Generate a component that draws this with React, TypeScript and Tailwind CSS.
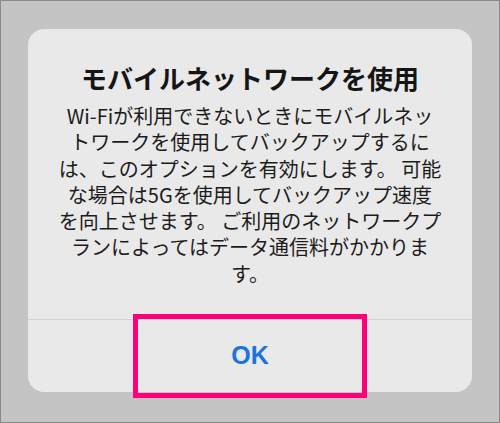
export default function App() {
  const lines = [
    'Wi-Fiが利用できないときにモバイルネッ',
    'トワークを使用してバックアップするに',
    'は、このオプションを有効にします。 可能',
    'な場合は5Gを使用してバックアップ速度',
    'を向上させます。 ご利用のネットワークプ',
    'ランによってはデータ通信料がかかりま',
    'す。',
  ];

  return (
    <div
      className="w-[500px] h-[423px] border border-[#8a8a8a] bg-[#c4c4c4] pt-[28px] pl-[27px]"
      style={{ fontFamily: '"Noto Sans CJK JP", "Noto Sans", sans-serif' }}
    >
      {/* Alert dialog */}
      <div className="relative w-[444px] h-[363px] rounded-[16px] bg-[#e9e9e9] flex flex-col">
        <div className="flex-1 flex flex-col items-center pt-[32px]">
          <h1 className="text-[26px] leading-[34px] font-bold text-[#151515] whitespace-nowrap">
            モバイルネットワークを使用
          </h1>
          <div className="mt-[8px] text-center text-[20px] leading-[26.3px] text-[#1c1c1c]">
            {lines.map((line) => (
              <p key={line} className="whitespace-nowrap">{line}</p>
            ))}
          </div>
        </div>

        <div className="h-[73px] border-t border-[#d4d4d4] flex items-center justify-center">
          <span className="text-[25px] font-bold text-[#1a73e0] font-['Liberation_Sans',sans-serif]">OK</span>
        </div>

        {/* highlight annotation */}
        <div className="absolute left-[105px] top-[285px] w-[234px] h-[84px] border-[5px] border-[#ff0078]" />
      </div>
    </div>
  );
}
